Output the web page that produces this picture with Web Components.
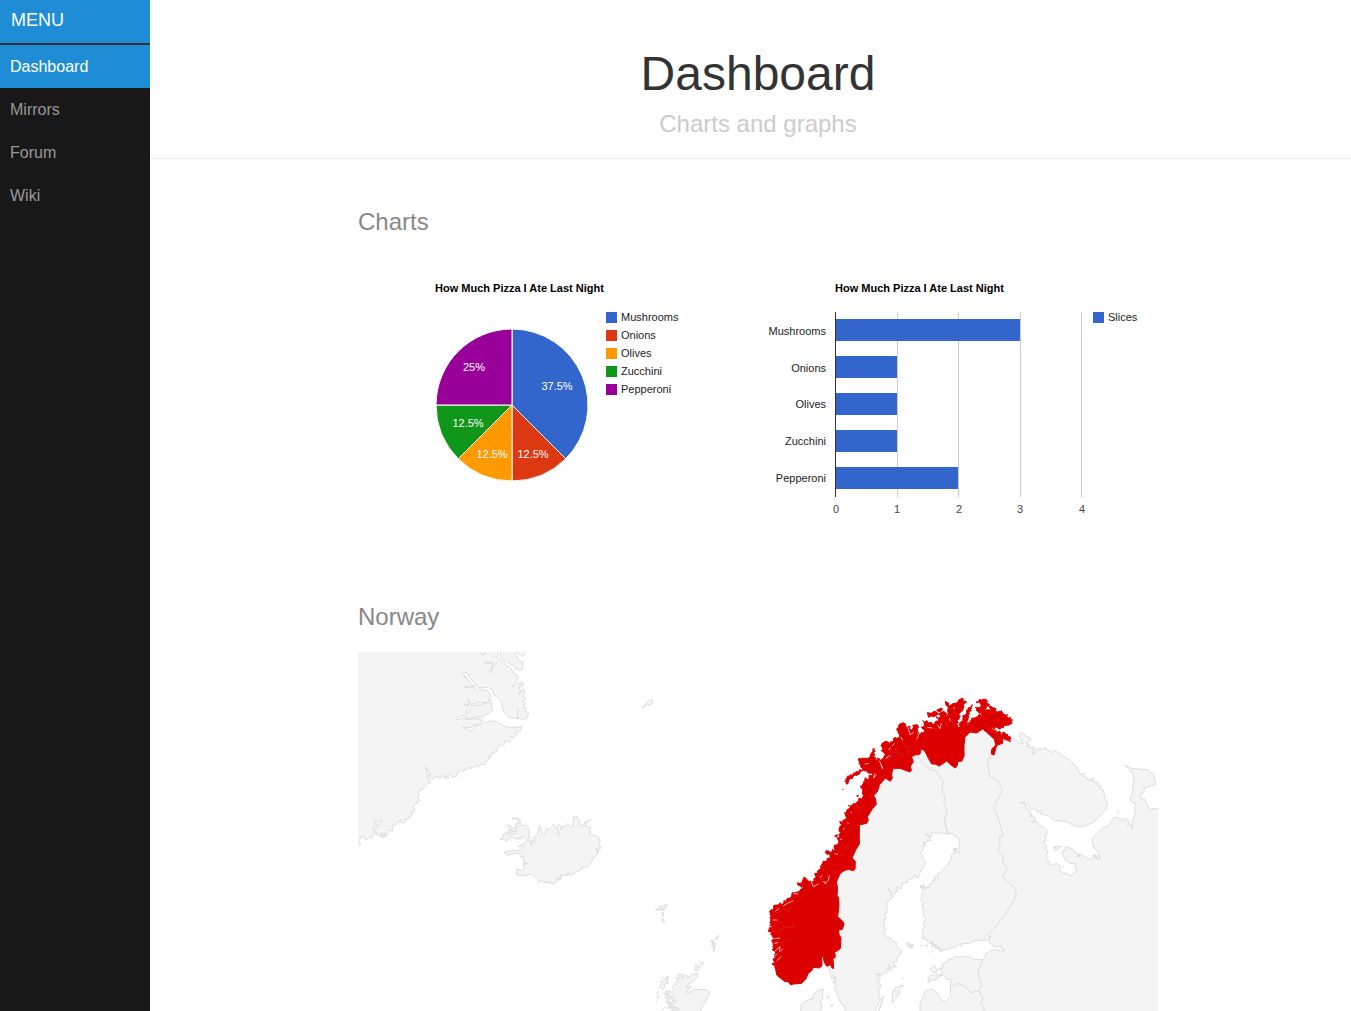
<!DOCTYPE html>
<html lang="en">
<head>
<meta charset="utf-8">
<meta name="viewport" content="width=device-width, initial-scale=1">
<title>Dashboard</title>
<style>
  body { margin: 0; background: #fff; color: #777; font: 16px "Liberation Sans", Arial, sans-serif; }
</style>
</head>
<body>
<dash-app></dash-app>

<script>
const define = (name, html, setup) => customElements.define(name, class extends HTMLElement {
  constructor() {
    super();
    this.attachShadow({ mode: "open" });
  }
  connectedCallback() {
    if (this.shadowRoot.firstChild) return;
    this.shadowRoot.innerHTML = html;
    if (setup) setup(this.shadowRoot, this);
  }
});

define("side-menu", `
  <style>
    :host { display: block; background: #191818; }
    .heading { display: block; padding: 7px 11px 9px; border-bottom: 2px solid #333; background: #1f8dd6; color: #fff; font-size: 18px; line-height: 27px; text-decoration: none; }
    ul { margin: 0; padding: 0; list-style: none; }
  </style>
  <nav aria-label="Main">
    <a class="heading" href="#">MENU</a>
    <ul><slot></slot></ul>
  </nav>`);

define("menu-item", `
  <style>
    :host { display: block; }
    li { display: block; }
    a { display: block; padding: 8px 10px; color: #999; line-height: 27px; text-decoration: none; }
    :host([current]) a { background: #1f8dd6; color: #fff; }
  </style>
  <li><a href="#"><slot></slot></a></li>`);

define("page-header", `
  <style>
    :host { display: block; padding: 40px 0 20px 15px; border-bottom: 1px solid #eee; text-align: center; }
    h1 { margin: 10px 0 12px; color: #333; font-size: 48px; font-weight: 400; line-height: 48px; }
    h2 { margin: 0; color: #ccc; font-size: 24px; font-weight: 400; line-height: 28px; }
  </style>
  <h1><slot></slot></h1>
  <h2><slot name="subtitle"></slot></h2>`);

define("page-section", `
  <style>
    :host { display: block; }
    h2 { margin: 0; padding: 50px 0 22px; color: #888; font-size: 24px; font-weight: 400; line-height: 26px; }
    div { display: flex; flex-wrap: wrap; }
  </style>
  <section><h2><slot name="title"></slot></h2><div><slot></slot></div></section>`);

const chartStyle = `
  <style>
    :host { display: block; width: 400px; }
    svg { display: block; width: 100%; font-size: 11px; }
    .title { font-weight: 700; fill: #000; }
    .label { fill: #222; }
    .tick { fill: #444; text-anchor: middle; }
    .side { text-anchor: end; }
    .slice { stroke: #fff; stroke-width: 1; }
    .share { fill: #fff; text-anchor: middle; }
  </style>`;
const chartTitle = `<text class="title" x="77" y="35">How Much Pizza I Ate Last Night</text>`;
const legendRow = (x, y, colour, text) =>
  `<rect x="${x}" y="${y}" width="11" height="11" fill="${colour}"/><text class="label" x="${x + 15}" y="${y + 9}">${text}</text>`;

const pizza = [
  ["Mushrooms", 3, "#3366cc", "37.5%", 199, 133],
  ["Onions", 1, "#dc3912", "12.5%", 175, 201],
  ["Olives", 1, "#ff9900", "12.5%", 134, 201],
  ["Zucchini", 1, "#109618", "12.5%", 110, 170],
  ["Pepperoni", 2, "#990099", "25%", 116, 114]
];

define("pie-chart", chartStyle + `<svg viewBox="0 0 400 297" role="img" aria-label="Pie chart">${chartTitle}<g></g></svg>`, root => {
  const cx = 154, cy = 148, r = 76;
  let turn = 0, out = "";
  const at = t => `${cx + r * Math.sin(t * 2 * Math.PI)} ${cy - r * Math.cos(t * 2 * Math.PI)}`;
  for (const [, n, colour] of pizza) {
    const next = turn + n / 8;
    out += `<path class="slice" fill="${colour}" d="M${cx} ${cy}L${at(turn)}A${r} ${r} 0 0 1 ${at(next)}Z"/>`;
    turn = next;
  }
  pizza.forEach(([name, , colour, share, x, y], i) => {
    out += `<text class="share" x="${x}" y="${y}">${share}</text>` + legendRow(248, 55 + i * 18, colour, name);
  });
  root.querySelector("g").innerHTML = out;
});

define("bar-chart", chartStyle + `<svg viewBox="0 0 400 297" role="img" aria-label="Bar chart">${chartTitle}<g></g></svg>`, root => {
  let out = "";
  const xs = [77, 139, 200, 262, 323];
  xs.forEach((x, i) => {
    if (i) out += `<rect x="${x}" y="55" width="1" height="185" fill="#ccc"/>`;
    out += `<text class="tick" x="${78 + Math.floor(i * 61.5)}" y="256">${i}</text>`;
  });
  pizza.forEach(([name, n], i) => {
    out += `<rect x="77" y="${62 + i * 37}" width="${xs[n] - 77}" height="22" fill="#3366cc"/>
      <text class="label side" x="68" y="${78 + Math.round(i * 36.7)}">${name}</text>`;
  });
  out += `<rect x="77" y="55" width="1" height="185" fill="#333"/>` + legendRow(335, 55, "#3366cc", "Slices");
  root.querySelector("g").innerHTML = out;
});

/* Turns a list of points into a ragged coastline, the same one on every load. */
const coast = (text, step, size, seed) => {
  const n = text.trim().split(/[\s,]+/).map(Number), out = [];
  const rnd = () => ((seed = (seed * 16807) % 2147483647) / 2147483647 - 0.5) * 2;
  for (let i = 0; i < n.length - 3; i += 2) {
    const [x, y, u, v] = n.slice(i, i + 4), len = Math.hypot(u - x, v - y) || 1, k = Math.max(1, Math.round(len / step));
    out.push(`${x} ${y}`);
    for (let j = 1; j < k; j++) {
      const d = rnd() * size;
      out.push(`${(x + (u - x) * j / k - (v - y) / len * d).toFixed(1)} ${(y + (v - y) * j / k + (u - x) / len * d).toFixed(1)}`);
    }
  }
  out.push(n.slice(-2).join(" "));
  return out.join("L");
};

define("norway-map", `
  <style>
    :host { display: block; width: 100%; }
    svg { display: block; width: 100%; }
    path { stroke: #ddd; stroke-width: 3; stroke-linejoin: round; }
    .land { fill: #f4f4f4; }
    .sea { fill: #fff; }
    .line { fill: none; }
    .norway { fill: #d00; stroke: #d00; stroke-width: 3; }
    .fjord { fill: none; stroke: #fff; stroke-width: 2; }
    .fjord.dim { stroke: #cf5555; stroke-width: 1; }
  </style>
  <svg viewBox="0 0 2400 1077" role="img" aria-label="Map of Norway"></svg>`, root => {
  const land = d => `<path class="land" d="${d}"/>`, sea = d => `<path class="sea" d="${d}"/>`, line = d => `<path class="line" d="${d}"/>`;
  const group = (x, y, s) => `<g transform="translate(${x} ${y})">${s}</g>`;

  const greenland = land("M-20 -20L" +
    "445 20 446 36 440 52 462 66 468 76 482 84 490 100 504 109 500 122 488 140 506 128 513 124 508 137 520 127 520 139 506 142 512 152 504 166 518 148 525 154 519 168 528 174 518 184 527 190 519 202 530 205 524 214 536 218 530 236 521 238 505 236 478 233 460 215 455 187 444 171 431 165 427 148 412 142 387 145 377 131 359 113 351 99 334 95 349 113 341 107 356 121 364 132 377 140 343 142 362 139 379 149 411 151 424 166 416 178 425 180 413 188 390 187 364 193 354 178 358 194 341 192 357 200 343 226 320 232 320 239 349 233 355 238 347 229 365 202 361 197 390 195 410 188 427 189 423 196 428 212 397 231 372 232 347 239 375 236 400 241 382 252 360 263 336 262 365 273 375 258 397 251 423 242 429 248 432 241 464 259 490 263 516 260 511 273 498 276" +
    "L" + coast("498 276 492 292 485 287 480 306 468 299 459 317 450 314 438 328 442 334 430 338 420 342 424 350 412 354 414 362 397 375 373 380 344 390 319 402 319 410 304 407 294 402 297 414 288 408 286 418 278 406 270 416 260 410 249 418 241 404 234 411 240 397 232 389 226 380 232 396 230 408 240 416 242 428 231 434 213 449 204 460 207 485 190 498 193 510 187 519 181 530 171 538 159 548 152 540 142 550 128 560 129 572 115 570 112 588 104 578 107 590 97 582 100 594 90 587 98 577 82 587 73 572 80 558 96 546 86 541 82 549 72 539 78 551 70 567 75 580 70 588 50 600 41 588 31 597 27 604 33 611 20 615", 4, 4, 11) +
    "L-20 630Z") + land("M450 20L452 52 470 66 488 76 500 88 516 90 520 68 508 62 496 44 500 36 514 49 522 46 522 20Z")
    + line("M388 38L400 46 398 38M410 36L402 44M431 65L401 68 428 70 421 101 430 78 442 66M505 203L502 236");

  const iceland = land("M" + "112 122L118 114 116 100 120 95 113 91 116 82 108 75 98 77 86 70 82 56 66 58 68 53 82 53 90 60 91 70 82 68 74 74 85 78 82 82 75 80 78 88 70 83 55 73 52 79 61 84 54 92 67 88 65 96 48 96 45 104 36 105 42 110 29 118 47 120 50 124 62 110 82 118 92 115 96 118 87 114 99 109 112 120 106 129 92 135 85 140 105 137 97 147 85 152 70 150 43 157 50 166 75 160 90 160 90 170 102 172 97 181 105 182 100 190 115 190 99 193 104 205 95 211 80 208 79 226 103 226 125 222 134 230 145 241 165 247 194 251 202 243 198 238 211 240 214 231 210 227 216 226 235 225 232 219 240 226 251 221 276 207 275 201 293 201 302 190 309 173 319 166 327 152 316 147 331 148 328 139 335 142 326 135 331 127 326 111 296 100 303 96 297 90 304 82 286 80 291 70 304 58 284 65 281 75 273 78 266 68 272 62 262 57 261 49 251 50 248 78 242 80 232 71 226 80 220 78 212 92 215 80 205 73 200 83 207 108 203 90 190 72 185 82 174 93 170 84 163 103 155 97 150 77 145 82 143 103 131 112 137 119 135 127 127 119 124 138 121 122Z") + line("M145 250L148 245M200 230L206 238 212 229M236 214L238 227M316 143L325 155M318 155L326 160M56 98L66 104 78 98M62 90L70 96 84 92M50 106L60 100");

  const isles = land("M126 363L127 351 115 350 122 338 108 335 117 326 104 324 112 312 105 308 117 302 124 307 132 298 126 292 134 286 136 278 144 272 140 263 148 265 145 253 156 252 155 261 166 256 176 261 190 252 203 251 203 261 183 278 167 290 182 292 169 304 172 311 194 298 231 299 239 309 228 332 216 353 207 370Z")
    + land("M116 259L106 264 104 271 93 274 95 282 87 292 96 294 97 300 105 292 102 284 111 278Z")
    + line("M96 262L102 266M112 261L112 282M87 304L80 308 87 314 82 322 89 326M80 331V338M100 309L110 316 106 304 118 310 112 320 129 318 119 326 136 324 126 333 139 333 130 342 112 339 129 347 112 354 140 353 148 358 118 363M95 362L106 350M158 263L150 271M170 292L185 290M172 306L182 308")
    + land("M76 58L84 62 91 53 86 49 97 50 104 43 113 46 98 59 107 55 97 63 93 57ZM94 69L101 68 98 78 103 79ZM95 85L102 89 102 99 97 94Z")
    + land("M242 158L246 148 252 160 259 158 254 169 250 185 254 175 242 166 251 164 246 157ZM256 147L266 135 261 149Z")
    + line("M78 60L90 60M90 48L100 56M248 150L252 182M193 230L203 223 211 235 203 244 198 235 194 243M206 214L212 220 219 217 214 227M218 223L221 219M198 226V240M206 228L200 240")
    + land("M37 -547L54 -566 66 -572 69 -562 62 -556 50 -555Z");

  /* Scandinavia, Finland, Russia and the White Sea shore. */
  const mainland = land("M84 54L100 55 112 64 118 70 129 73 122 62 128 60 117 50 122 37 133 42 138 50 152 53 150 62 138 68 152 78 140 76 145 83 160 81 165 88 155 88 162 95 154 105 166 97 168 89 181 85 182 92 196 81 203 92 220 98 222 90 230 95 250 108 275 125 291 143 300 163 314 161 309 167 335 184 336 171 345 187 353 188 355 200 361 195 360 205 370 210 375 237 383 246 378 269 345 303 328 313 305 321 284 318 260 305 221 300 204 286 198 289 192 282 182 284 183 271 173 277 168 269 153 266 141 250 118 247 135 250 138 264 152 273 149 282 158 285 148 289 165 292 166 302 153 305 172 305 180 318 193 322 200 329 202 343 195 347 198 362 188 365 200 377 197 391 204 396 199 406 202 420 214 434 230 431 239 438 242 455 257 460 272 467 290 454 284 440 289 432 270 430 258 420 250 410 246 395 256 390 255 381 277 386 290 402 301 402 290 410 303 405 332 418 345 413 338 408 345 404 351 409 357 404 360 416 351 420 361 412 354 397 343 385 336 367 338 355 366 325 385 318 402 292 421 295 425 299 437 295 448 306 442 320 453 312 458 330 456 306 468 280 464 267 468 250 458 249 449 239 459 213 458 190 463 190 459 161 434 135 455 145 505 150 511 158 521 161 527 194 492 204 493 213 480 230 483 235 495 238 501 254 510 268 534 264 560 270 560 900 -405 900 -405 860 -412 856 -420 845 -430 820 -437 805 -431 795 -437 785 -435 775 -445 775 -450 755 -458 735 -435 720 -432 480 -390 435 -375 330 -336 255 -270 156 -210 120 -135 75 0 0 70 40Z")
    + land("M220 382L230 378 242 380 235 389 222 391 228 384ZM412 272L417 279 413 277ZM250 438L253 440 250 442Z")
    + line("M344 406L352 416 346 416M290 404L298 408M30 105L34 113 24 118 25 145 30 170 50 180 68 210 40 262 55 295 61 317 70 345 60 350 58 360 61 373 56 378 57 395 68 405 70 430 82 445 68 470 79 482 100 499 110 520 96 552 74 585 50 615 10 657");

  const baltic = sea("M40 600L46 573 58 543 71 528 64 553 54 578 65 545 55 530 60 516 56 508 64 496 53 487 62 480 48 476 62 470 47 461 66 465 69 457 81 459 80 449 91 452 82 447 89 447 87 434 95 449 100 440 109 441 97 426 112 425 107 411 116 410 124 396 120 387 109 380 109 368 96 362 92 354 77 350 73 341 76 325 70 320 76 312 70 298 78 297 74 280 82 278 79 244 90 240 102 228 94 226 85 205 97 220 106 223 103 214 113 216 110 201 125 207 126 190 142 187 142 181 164 173 164 164 174 174 180 158 197 130 184 111 190 108 179 99 189 92 191 75 199 78 188 67 200 67 204 60 215 63 207 52 197 40 213 53 215 34 221 41 228 36 237 42 242 36 252 44 258 39 266 45 272 38 283 48 290 49 299 61 298 81 295 87 301 99 289 93 291 85 280 86 280 92 291 96 276 101 273 118 257 143 244 151 245 158 233 160 234 173 224 170 226 181 217 180 218 189 207 194 211 207 202 199 198 208 191 205 193 194 181 200 192 209 185 218 187 231 181 238 189 248 187 267 193 274 188 284 198 298 190 310 194 321 186 331 190 350 185 357 197 354 200 362 212 363 207 371 220 366 219 376 229 373 225 384 239 381 234 391 245 386 241 396 253 388 266 389 278 381 288 382 293 373 305 377 307 369 325 371 347 361 370 361 383 362 390 347 388 369 395 372 400 379 424 380 426 388 435 391 425 394 404 389 390 392 375 403 377 410 369 420 343 418 316 407 308 411 285 409 277 417 264 418 262 426 248 430 247 444 237 447 248 455 243 466 254 466 259 478 275 478 272 492 271 530 255 545 241 538 231 517 215 507 195 514 189 532 180 550 180 600Z")
    + land("M97 514L103 515 106 502 117 501 120 496 131 496 117 508 120 521 107 537 98 548 97 535Z M202 475L215 464 242 464 241 470 233 471 230 480 217 480 208 488 203 484 209 479Z M209 446L220 441 224 436 226 446 234 449 230 456 220 457Z")
    + land("M138 371L145 367 148 373 158 372 161 381 150 378 157 386 147 381 143 379ZM126 474L131 476ZM173 374L174 375ZM182 377L187 377ZM196 377L204 377 200 375ZM213 377L218 381ZM280 85L290 86 287 91ZM217 391L219 396ZM203 398L206 396ZM180 197L190 201 184 205ZM168 172L176 169Z")
    + line("M208 366L222 374M214 372L232 382M222 380L240 388M190 204L206 200M192 66L194 76M140 376L158 378")
    + line("M252 0L258 21 265 40M369 420L356 449 355 471 367 497 358 504 358 515 345 514 333 519 315 498 291 490 272 500M358 515L368 533 362 553 371 560 374 590");

  const denmark = land("M181 495L184 463 197 453 215 447 222 430 235 421 253 418 246 426 249 447 240 453 246 462 244 482 240 495Z") + line("M272 463L276 471M258 444L267 439 265 443ZM273 468L281 465M279 373L280 385 286 379 285 394 278 396 286 403M206 448L216 450 224 442");

  const inner = "572 155 560 150 548 145 548 160 530 166 522 195 514 192 515 178 527 165 523 148 500 127 488 117 470 129 450 126 435 142 432 165 432 198 426 213 413 215 412 226 406 234 393 225 380 213 358 228 345 222 335 222 325 205 318 190 312 180 302 178 300 192 285 195 274 200 280 215 270 231 275 239 270 246 240 235 218 235 215 255 217 264 211 274 196 264 178 285 172 305 161 317 166 325 169 343 158 355 142 381 145 391 140 400 118 405 118 462 107 480 96 505 106 514 105 538 98 542 88 538 74 541 60 551 49 577 53 595 51 616 56 625 57 646 53 680 69 695 72 702 67 718 56 720 57 733 63 745 61 775 54 782 44 785 46 801 39 808 41 835 36 834 31 824 20 829 12 815 9 795 5 805 6 827 -2 834 -20 832 -25 842 -35 850 -42 866 -55 880 -80 882 -87 885 -96 875 -105 875 -130 855 -133 838";
  const outer = "-133 838 -128 828 -140 825 -137 795 -142 770 -140 743 -148 725 -154 720 -146 714 -149 690 -146 660 -130 645 -108 638 -90 622 -76 608 -58 598 -50 590 -66 582 -54 575 -49 562 -38 570 -20 574 -8 545 5 522 22 510 30 497 16 488 28 485 42 482 42 470 54 462 55 442 62 428 62 402 76 387 80 362 90 348 108 342 116 326 128 324 128 306 124 294 134 268 148 262 156 250 146 248 134 243 120 247 105 255 88 268 78 282 74 274 86 258 104 250 122 240 132 236 122 229 116 221 124 214 116 206 132 206 145 204 154 190 163 176 160 198 170 212 178 206 188 208 196 194 184 182 186 163 200 155 212 156 220 146 232 148 238 138 234 128 236 108 250 103 260 112 270 108 272 124 280 112 294 120 294 134 308 128 312 118 304 112 312 100 308 92 330 98 344 102 354 94 348 80 362 82 368 72 380 78 388 68 382 58 392 52 404 56 416 46 432 50 424 64 418 82 411 108 415 112 428 86 440 66 456 44 454 62 444 88 440 104 452 98 460 84 472 80 474 62 466 52 480 54 484 45 468 36 484 31 500 30 498 39 508 42 498 54 496 66 508 60 512 48 524 54 532 66 545 62 555 74 562 72 566 84 578 90 576 98 562 106 550 114 530 112 512 112 520 120 538 124 540 132 556 130 568 138 572 155";
  const islands = "M322 68L334 70 342 64 350 66 354 72 342 80 334 78 326 82ZM376 34L386 40 384 48 378 46ZM396 42L412 38 416 30 428 24 430 32 440 36 430 44 424 50 414 48 406 52 398 50ZM382 50L394 44 402 50 390 58ZM68 298L70 300ZM44 438L52 434 50 442ZM110 318L116 316 113 320ZM350 60L366 54 366 62 356 66ZM240 102L250 98 258 104 250 112ZM148 204L162 178 160 198 152 214ZM278 106L292 104 296 112 286 118ZM355 72L372 64 382 74 368 80ZM186 160L198 154 206 158 200 168 188 170ZM-68 578L-58 582 -56 588 -66 586ZM18 482L30 488 22 494ZM58 396L62 394ZM72 370L76 368ZM84 346L88 348ZM68 410L64 414Z";
  const fjords = "M165 250L160 264 170 256M264 112L270 134 282 126M300 126L290 148M178 212L188 236 184 224M196 206L210 196M352 104L360 116 364 100M388 84L392 94M242 140L248 152M484 76L478 68M8 574L20 578 25 570 28 556M-28 570L-20 590 -4 582M18 582L12 578M-80 610L-66 612M-137 760L-126 758M-136 784L-120 770 -122 786M-130 812L-116 800M-140 800L-128 792M-142 690L-128 690M-110 648L-98 640 -80 632M-136 746L-120 744M0 564L6 556M60 450L66 446M70 420L74 414M92 366L96 370M82 398L86 402M44 490L54 494M-118 784L-112 776M-134 664L-122 656M134 222L146 220M322 112L336 114M336 94L340 86M216 168L224 160M206 180L212 172";
  const dim = "M-125 722L-102 710 -86 715 -82 704 -74 710M-140 670L-120 665 -110 658M-120 760L-104 752 -90 750M130 258L142 270 150 266M230 178L240 196 254 188M206 212L216 190 232 186M250 160L260 176 272 168M120 296L134 304M110 348L118 360 124 356M72 470L84 476M60 490L72 496M400 86L398 104M486 74L490 86M530 130L538 148 546 142M10 560L0 568M330 104L340 116 352 114M-130 700L-112 694M-96 664L-84 650M-60 626L-50 612M372 92L380 104M260 196L268 180";
  const norway = `<path class="norway" d="M${inner.replace(/(\S+ \S+) /g, "$1L")}L${coast(outer, 4, 5, 77)}Z${islands}"/>
    <path class="fjord" d="${fjords}"/><path class="fjord dim" d="${dim}"/>`;

  root.querySelector("svg").innerHTML =
    group(-24, -36, greenland) + group(396, 444, iceland) + group(816, 714, isles) +
    group(1866, 204, mainland) + group(1506, 504, baltic) + group(1146, 594, denmark) +
    group(1386, 114, line("M290 197L302 209 325 236 348 243 370 275 366 306 375 321 371 338 382 360 373 391 379 418 385 430") + norway);
});

define("dash-app", `
  <style>
    :host { display: flex; min-height: 100vh; }
    side-menu { flex: 0 0 150px; }
    main { flex: 1; min-width: 0; }
    .content { box-sizing: border-box; max-width: 815px; margin: 0 auto; padding-left: 15px; }
  </style>
  <side-menu>
    <menu-item current>Dashboard</menu-item>
    <menu-item>Mirrors</menu-item>
    <menu-item>Forum</menu-item>
    <menu-item>Wiki</menu-item>
  </side-menu>
  <main>
    <page-header>Dashboard<span slot="subtitle">Charts and graphs</span></page-header>
    <div class="content">
      <page-section><span slot="title">Charts</span><pie-chart></pie-chart><bar-chart></bar-chart></page-section>
      <page-section><span slot="title">Norway</span><norway-map></norway-map></page-section>
    </div>
  </main>`);
</script>
</body>
</html>
